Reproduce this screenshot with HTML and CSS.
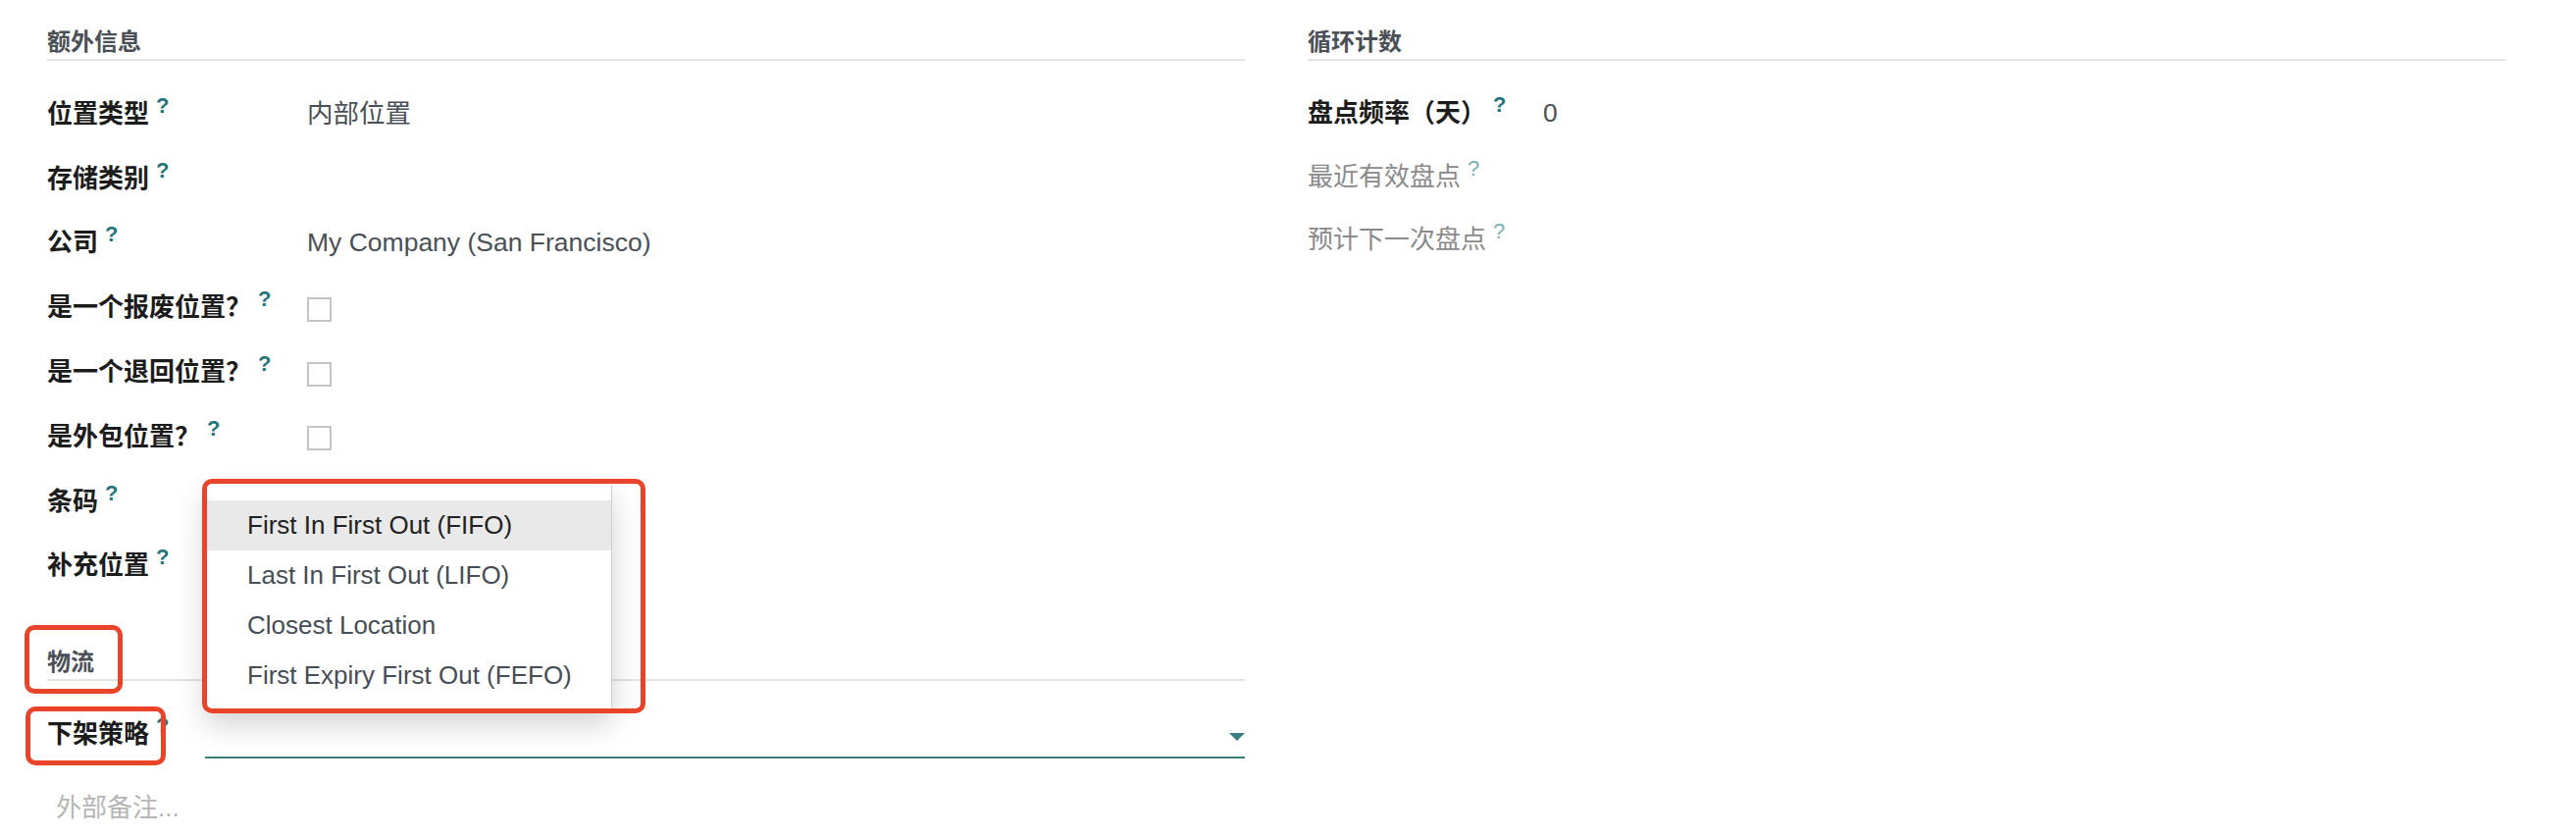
FILE: index.html
```html
<!DOCTYPE html>
<html lang="zh-CN">
  <head>
    <meta charset="utf-8">
    <title>库位 - 额外信息</title>
    <link rel="stylesheet" href="styles.css">
  </head>
  <body>
    <div class="page">

      <!-- Left group: extra info + logistics -->
      <div class="column">
        <div class="group-title">额外信息</div>
        <div class="fields">
          <div class="field-row">
            <span class="label">位置类型<span class="help">?</span></span>
            <span class="value">内部位置</span>
          </div>
          <div class="field-row">
            <span class="label">存储类别<span class="help">?</span></span>
            <span class="value"></span>
          </div>
          <div class="field-row">
            <span class="label">公司<span class="help">?</span></span>
            <span class="value">My Company (San Francisco)</span>
          </div>
          <div class="field-row">
            <span class="label">是一个报废位置？<span class="help">?</span></span>
            <span class="checkbox"></span>
          </div>
          <div class="field-row">
            <span class="label">是一个退回位置？<span class="help">?</span></span>
            <span class="checkbox"></span>
          </div>
          <div class="field-row">
            <span class="label">是外包位置？<span class="help">?</span></span>
            <span class="checkbox"></span>
          </div>
          <div class="field-row">
            <span class="label">条码<span class="help">?</span></span>
            <span class="value"></span>
          </div>
          <div class="field-row">
            <span class="label">补充位置<span class="help">?</span></span>
            <span class="value"></span>
          </div>
        </div>

        <div class="group-title logistics-title">物流</div>
        <div class="field-row select-row">
          <span class="label label-narrow">下架策略<span class="help">?</span></span>
          <div class="select"><span class="select-arrow"></span></div>
        </div>

        <div class="note-placeholder">外部备注...</div>
      </div>

      <!-- Right group: cycle count -->
      <div class="column column-right">
        <div class="group-title">循环计数</div>
        <div class="fields">
          <div class="field-row">
            <span class="label">盘点频率（天）<span class="help">?</span></span>
            <span class="value">0</span>
          </div>
          <div class="field-row">
            <span class="label label-muted">最近有效盘点<span class="help">?</span></span>
            <span class="value"></span>
          </div>
          <div class="field-row">
            <span class="label label-muted">预计下一次盘点<span class="help">?</span></span>
            <span class="value"></span>
          </div>
        </div>
      </div>

      <!-- Removal strategy dropdown -->
      <ul class="dropdown">
        <li class="active">First In First Out (FIFO)</li>
        <li>Last In First Out (LIFO)</li>
        <li>Closest Location</li>
        <li>First Expiry First Out (FEFO)</li>
      </ul>

      <!-- Red highlight marks -->
      <div class="mark mark-dropdown"></div>
      <div class="mark mark-logistics"></div>
      <div class="mark mark-removal"></div>
    </div>
  </body>
</html>
```

FILE: styles.css
```css
body {
  margin: 0;
  background-color: #fff;
  font-family: "Liberation Sans", "Noto Sans CJK SC", sans-serif;
  font-size: 26px;
  color: #4a4f55;
}

.page {
  position: relative;
  display: flex;
  gap: 64px;
  padding: 0 72px 0 48px;
  height: 852px;
  box-sizing: border-box;
}

.column {
  flex: 1;
  min-width: 0;
}

/* Group titles with the light rule under them */
.group-title {
  padding-top: 27px;
  padding-bottom: 1px;
  line-height: 32px;
  font-size: 24px;
  font-weight: 600;
  color: #4b4f56;
  border-bottom: 2px solid #e3e3e3;
}

.logistics-title {
  margin-top: 23px;
}

.fields {
  padding-top: 21px;
}

.field-row {
  display: flex;
  align-items: center;
  height: 65.8px;
  line-height: 26px;
}

.column-right .field-row {
  height: 64.5px;
}

.label {
  flex: none;
  width: 265px;
  font-weight: 600;
  color: #1c1c1c;
}

.column-right .label {
  width: 240px;
}

.label-muted {
  font-weight: 400;
  color: #8a8a8a;
}

.label-narrow {
  width: 161px;
}

/* Tooltip question mark */
.help {
  margin-left: 7px;
  font-size: 22px;
  font-weight: 600;
  line-height: 0;
  vertical-align: 10px;
  color: #25747a;
}

.label-muted .help {
  font-weight: 400;
  color: #7fb1b3;
}

.value {
  color: #4a4f55;
  font-size: 26.5px;
}

.checkbox {
  width: 25px;
  height: 25px;
  margin-top: 4px;
  border: 2px solid #c4c4c4;
  box-sizing: border-box;
}

/* Removal strategy select */
.select-row {
  height: 50px;
  margin-top: 29px;
}

.select {
  flex: 1;
  height: 50px;
  display: flex;
  align-items: center;
  justify-content: flex-end;
  border-bottom: 2px solid #3a7d80;
  box-sizing: border-box;
}

.select-arrow {
  width: 0;
  height: 0;
  margin-top: 8px;
  border-left: 8px solid transparent;
  border-right: 8px solid transparent;
  border-top: 8px solid #3a7d80;
}

.note-placeholder {
  margin-top: 34px;
  padding-left: 9px;
  line-height: 32px;
  color: #b5b5b5;
}

/* Dropdown list opened above the select */
.dropdown {
  position: absolute;
  left: 209px;
  top: 494px;
  width: 415px;
  margin: 0;
  padding: 16px 0 12px;
  list-style: none;
  background-color: #fff;
  border-right: 1px solid #cfcfd2;
  box-sizing: border-box;
  box-shadow: 0 12px 28px rgba(0, 0, 0, 0.18);
}

.dropdown li {
  padding-left: 43px;
  line-height: 51px;
  color: #474d55;
  white-space: nowrap;
}

.dropdown li.active {
  background-color: #e9e9e9;
  color: #222;
}

/* Red annotation rectangles */
.mark {
  position: absolute;
  border: 5px solid #e9442a;
  border-radius: 10px;
  box-sizing: border-box;
}

.mark-dropdown {
  left: 206px;
  top: 488px;
  width: 452px;
  height: 239px;
}

.mark-logistics {
  left: 25px;
  top: 637px;
  width: 100px;
  height: 70px;
}

.mark-removal {
  left: 26px;
  top: 720px;
  width: 143px;
  height: 60px;
}
```
